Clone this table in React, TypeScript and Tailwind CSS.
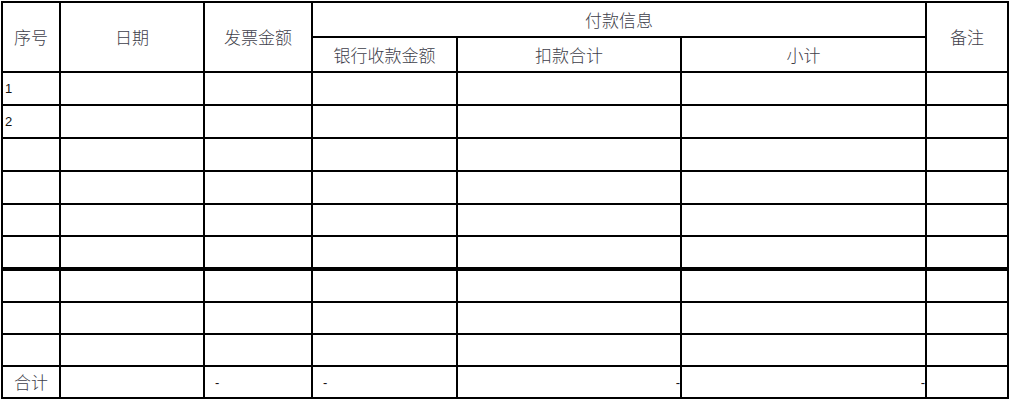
import React from "react";

// Ligne de données du tableau de paiement
interface Ligne {
  numero: string;
  date: string;
  montantFacture: string;
  banque: string;
  deduction: string;
  sousTotal: string;
  remarque: string;
}

const vide = { date: "", montantFacture: "", banque: "", deduction: "", sousTotal: "", remarque: "" };

const lignes: Ligne[] = [
  { numero: "1", ...vide },
  { numero: "2", ...vide },
  { numero: "", ...vide },
  { numero: "", ...vide },
  { numero: "", ...vide },
  { numero: "", ...vide },
  { numero: "", ...vide },
  { numero: "", ...vide },
  { numero: "", ...vide },
];

const cjk = "font-['Noto_Sans_CJK_SC','Noto_Sans',sans-serif]";

const Header: React.FC<{ children: React.ReactNode; className?: string }> = ({
  children,
  className = "",
}) => (
  <div
    className={`bg-white flex items-center justify-center text-[17px] font-light text-[#3e3e4a] ${cjk} ${className}`}
  >
    {children}
  </div>
);

const Cell: React.FC<{ children?: React.ReactNode; className?: string }> = ({
  children,
  className = "",
}) => (
  <div
    className={`bg-white text-[13px] leading-none text-[#111] font-['Liberation_Sans',sans-serif] ${className}`}
  >
    {children}
  </div>
);

const App: React.FC = () => {
  return (
    <div className="w-[1012px] h-[402px] bg-white overflow-hidden">
      <div className="grid w-fit ml-[1px] mt-[1px] p-[2px] gap-[2px] bg-black grid-cols-[56px_142px_106px_143px_222px_243px_80px] grid-rows-[33px_33px_31px_31px_31px_31px_30px_30px_32px_30px_30px_30px]">
        {/* En-tête */}
        <Header className="row-span-2">序号</Header>
        <Header className="row-span-2">日期</Header>
        <Header className="row-span-2">发票金额</Header>
        <Header className="col-span-3">付款信息</Header>
        <Header className="row-span-2">备注</Header>
        <Header>银行收款金额</Header>
        <Header>扣款合计</Header>
        <Header>小计</Header>

        {/* Lignes de données */}
        {lignes.map((l, i) => {
          const thick = i === 6 ? "border-t-2 border-black" : "";
          return (
            <React.Fragment key={i}>
              <Cell className={`flex items-end pl-[2px] pb-[9px] ${thick}`}>{l.numero}</Cell>
              <Cell className={thick}>{l.date}</Cell>
              <Cell className={thick}>{l.montantFacture}</Cell>
              <Cell className={thick}>{l.banque}</Cell>
              <Cell className={thick}>{l.deduction}</Cell>
              <Cell className={thick}>{l.sousTotal}</Cell>
              <Cell className={thick}>{l.remarque}</Cell>
            </React.Fragment>
          );
        })}

        {/* Total */}
        <Header className="text-[16px]">合计</Header>
        <Cell />
        <Cell className="flex items-center pl-[10px]">-</Cell>
        <Cell className="flex items-center pl-[10px]">-</Cell>
        <Cell className="flex items-center justify-end">-</Cell>
        <Cell className="flex items-center justify-end">-</Cell>
        <Cell />
      </div>
    </div>
  );
};

export default App;
